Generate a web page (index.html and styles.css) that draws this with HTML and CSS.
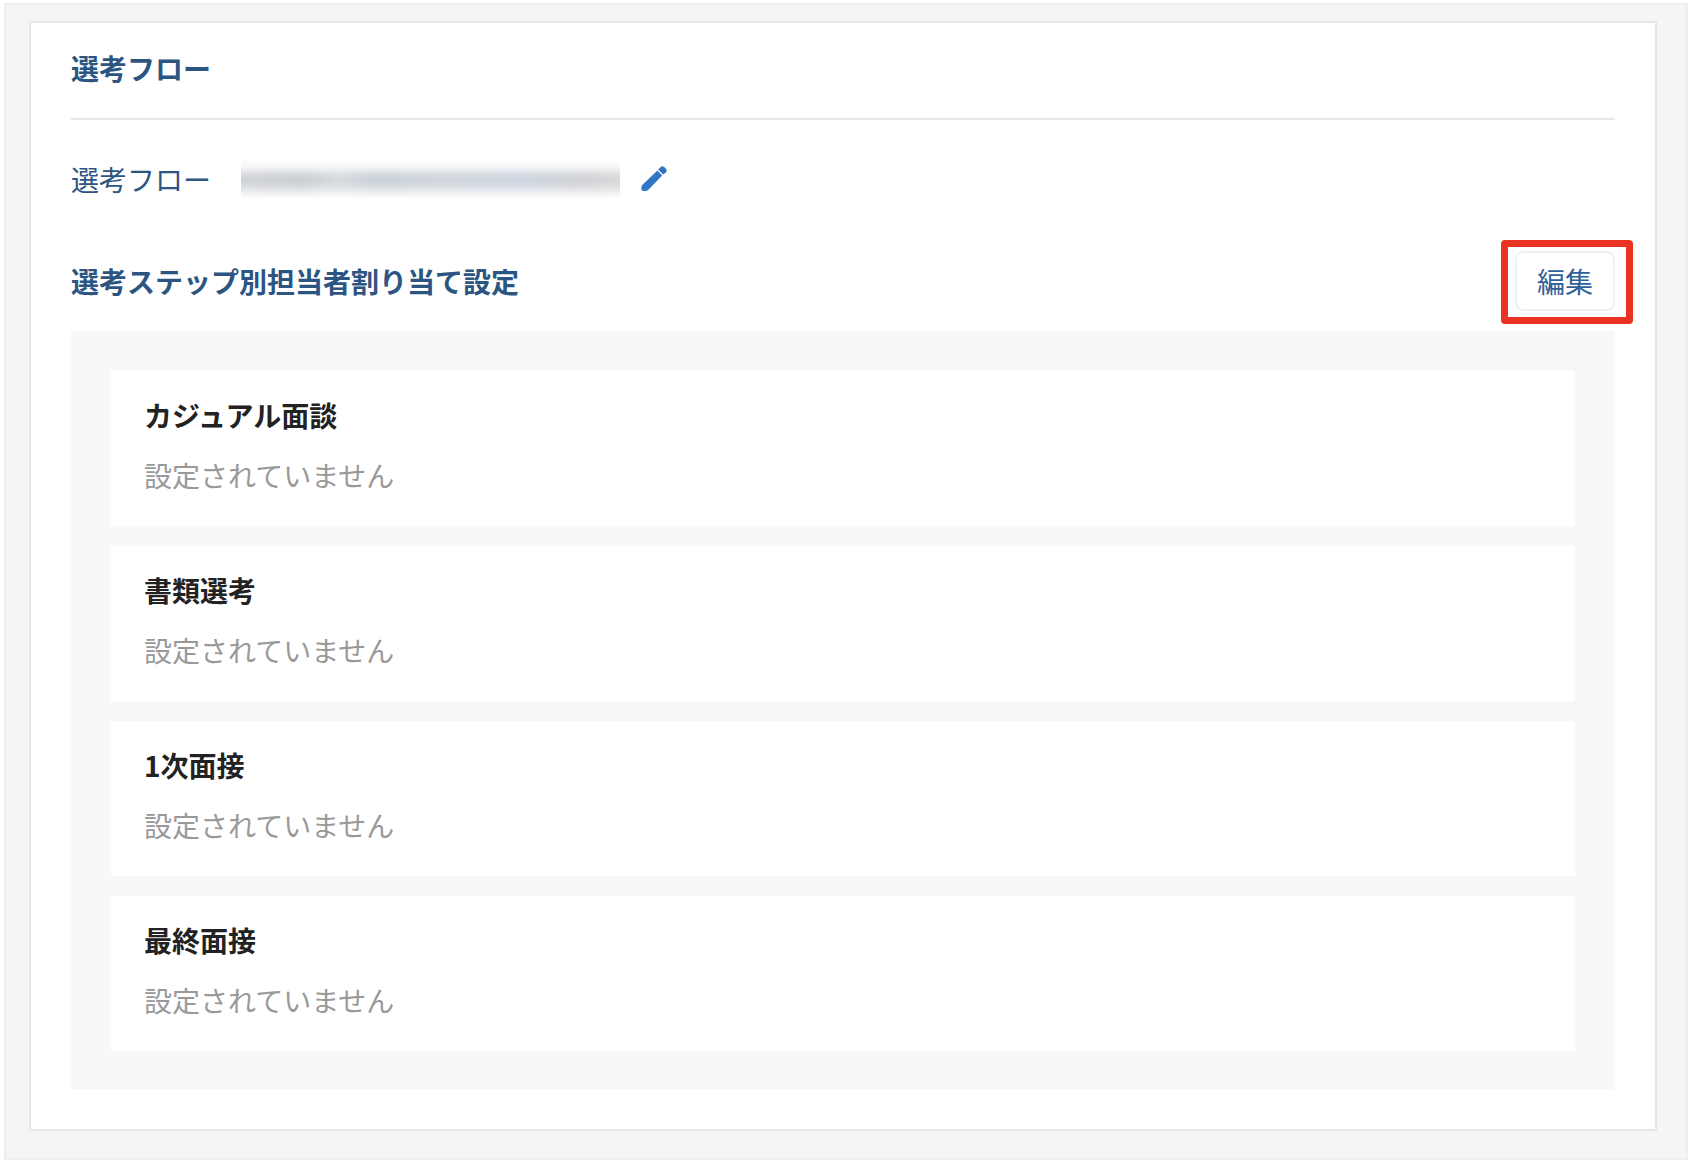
FILE: index.html
```html
<!DOCTYPE html>
<html lang="ja">
<head>
    <meta charset="UTF-8">
    <meta name="viewport" content="width=device-width, initial-scale=1.0">
    <title>選考フロー</title>
    <link rel="stylesheet" href="styles.css">
</head>
<body>
    <main class="page">
        <section class="card">
            <h1 class="card-title">選考フロー</h1>

            <div class="flow-row">
                <span class="flow-label">選考フロー</span>
                <span class="flow-value"></span>
                <button type="button" class="icon-btn" aria-label="選考フローを変更">
                    <svg width="28" height="28" viewBox="0 0 28 28" fill="#2f76c6">
                        <path d="M17.4 5.6 22.2 10.4 8.6 24.4Q7.2 26 5.2 26H3.2Q1.4 26 1.4 24.2V22.4Q1.4 21 2.6 19.8Z"/>
                        <path d="M18.2 4.6 20.6 2Q22.4 .4 24.2 2L26 3.8Q27.6 5.6 26 7.2L23.2 9.6Z"/>
                    </svg>
                </button>
            </div>

            <div class="assign-head">
                <h2 class="assign-title">選考ステップ別担当者割り当て設定</h2>
                <div class="highlight">
                    <button type="button" class="edit-btn">編集</button>
                </div>
            </div>

            <ul class="steps">
                <li class="step">
                    <h3 class="step-name">カジュアル面談</h3>
                    <p class="step-empty">設定されていません</p>
                </li>
                <li class="step">
                    <h3 class="step-name">書類選考</h3>
                    <p class="step-empty">設定されていません</p>
                </li>
                <li class="step">
                    <h3 class="step-name">1次面接</h3>
                    <p class="step-empty">設定されていません</p>
                </li>
                <li class="step">
                    <h3 class="step-name">最終面接</h3>
                    <p class="step-empty">設定されていません</p>
                </li>
            </ul>
        </section>
    </main>
</body>
</html>
```
FILE: styles.css
```css
* {
    margin: 0;
    padding: 0;
    box-sizing: border-box;
}
body {
    padding: 3px 4px 4px;
    background: #fff;
    font-family: "Noto Sans CJK JP", sans-serif;
    font-size: 28px;
    line-height: 42px;
    color: #2c5582;
}
h1, h2, h3 {
    font-size: 28px;
    font-weight: bold;
}
.page {
    padding: 16px 29px 27px 23px;
    background: #f5f5f5;
    border: 2px solid #eee;
}
.card {
    padding: 24px 40px 40px;
    background: #fff;
    border: 2px solid #e6e6e6;
}
.card-title {
    padding-bottom: 29px;
    border-bottom: 2px solid #e8e8e8;
}

/* current flow */
.flow-row {
    display: flex;
    align-items: center;
    margin: 38px 0 51px;
}
.flow-value {
    width: 379px;
    height: 40px;
    margin: 0 20px 0 30px;
    background:
        linear-gradient(to bottom, #fff, rgba(255, 255, 255, 0.8) 20%, rgba(255, 255, 255, 0.2) 38%, rgba(255, 255, 255, 0) 55%, rgba(255, 255, 255, 0.3) 72%, rgba(255, 255, 255, 0.8) 90%, #fff),
        linear-gradient(to right, #d0d3d6, #cbced2 16%, #d6d9dd 25%, #c9d0d8 36%, #cfd4db 50%, #ced5df 75%, #cfd1d5 88%, #d6d7d9);
}
.icon-btn {
    display: flex;
    background: none;
    border: none;
    cursor: pointer;
}

/* assignees per step */
.assign-head {
    display: flex;
    justify-content: space-between;
    align-items: center;
    margin-bottom: 20px;
}
.highlight {
    position: relative;
}
.highlight::after {
    content: "";
    position: absolute;
    inset: -11px -18px -13px -14px;
    border: 7px solid #eb3323;
    border-radius: 4px;
    pointer-events: none;
}
.edit-btn {
    display: block;
    padding: 7px 20px;
    background: #fff;
    border: 2px solid #edf1f7;
    border-radius: 8px;
    font: inherit;
    color: #2f6199;
    cursor: pointer;
}
.steps {
    display: flex;
    flex-direction: column;
    gap: 20px;
    padding: 40px 40px 38px;
    background: #f6f8fa;
    list-style: none;
}
.step {
    padding: 23px 33px 30px;
    background: #fff;
}
.step-name {
    margin-bottom: 18px;
    color: #222;
}
.step-empty {
    color: #999;
}
```
